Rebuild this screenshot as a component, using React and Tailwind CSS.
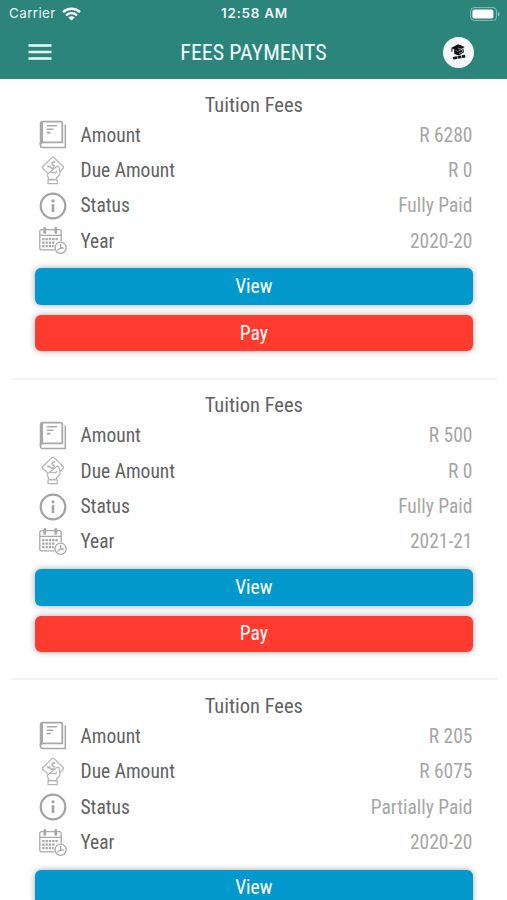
const fees = [
    { id: 1, amount: "R 6280", due: "R 0", status: "Fully Paid", year: "2020-20" },
    { id: 2, amount: "R 500", due: "R 0", status: "Fully Paid", year: "2021-21" },
    { id: 3, amount: "R 205", due: "R 6075", status: "Partially Paid", year: "2020-20" },
];

const BookIcon = () => (
    <svg width="28" height="30" viewBox="0 0 28 30" fill="none" stroke="#a8a8a8" strokeWidth="1.8">
        <path d="M3.2 1.6H21.7a1.6 1.6 0 0 1 1.6 1.6v19.2H3.4" />
        <path d="M3.2 1.6A1.9 1.9 0 0 0 1.5 3.5v22a2 2 0 0 0 2 2h22.8V4.6" strokeWidth="1.5" />
        <path d="M2.8 2v20.4a2.2 2.2 0 0 0-1.4 2" strokeWidth="2.4" />
        <path d="M7.9 5.8h10M7.9 9.2h6.4M7.9 12.6h3.6" strokeWidth="1.6" />
    </svg>
);

const DueIcon = () => (
    <svg width="28" height="30" viewBox="-0.8 0.4 28 30" fill="none" stroke="#b5b5b5" strokeWidth="1.2" strokeLinejoin="round">
        <path d="M8.4 17.8 3 12.9a1.5 1.5 0 0 1 0-2L12.2 2a1.5 1.5 0 0 1 2 0l9.1 8.9a1.5 1.5 0 0 1 0 2l-3.2 3.2" />
        <path d="M15.5 6.6c-2-.8-3.5.3-3 2 .4 1.2 2.3 1.2 2.3 2.6" strokeWidth="1.7" />
        <path d="M7.4 11.2c1.4-.9 2.6-.6 3.4.6s2.2 1 3.6.2" strokeWidth="1.7" />
        <path d="M8.4 17.8c1-1.3 2.6-1.6 4.2-1l3 .4c1.3-.3 1.4-1.5.2-2.1M17.3 10.6c1.3-.4 2 .4 2 1.6l.9 4.2c.2 2.4-1 4.2-3.4 5.6v1.7H8.6v-2l-1-1.3c-.4-1 0-2 .8-2.6Z" />
        <path d="M8.2 24.2h9.2v3.9H8.2z" />
    </svg>
);

const InfoIcon = () => (
    <svg width="28" height="28" viewBox="0 0 28 28" fill="none" stroke="#a2a2a2">
        <circle cx="14" cy="14" r="12.3" strokeWidth="2.2" />
        <path d="M14 12.2v7.8" strokeWidth="2.6" />
        <circle cx="14" cy="8.8" r="1.6" fill="#a2a2a2" stroke="none" />
    </svg>
);

const CalendarIcon = () => (
    <svg width="28" height="28" viewBox="0 0 28 28" fill="none" stroke="#a8a8a8" strokeWidth="1.3">
        <path d="M15.5 22.9H2.5A1.7 1.7 0 0 1 .8 21.2V4.3a1.7 1.7 0 0 1 1.7-1.7h18a1.7 1.7 0 0 1 1.7 1.7v10M.8 8.4h21.4" />
        <path d="M5.8 1.4v4.2M16.8 1.4v4.2" strokeWidth="2.8" strokeLinecap="round" />
        <path d="M3.2 12.2h16.4M3.2 15.7h13M3.2 19.2h11.5" strokeWidth="2.3" strokeDasharray="2.3 1" />
        <circle cx="21.6" cy="20.8" r="5.6" fill="#fff" />
        <path d="M21.6 17v4l-3.2 2.2M21.6 21h3.1" />
    </svg>
);

const Row = ({ icon, label, value }) => (
    <div className="flex h-[35.4px] items-center text-[19.5px]">
        <div className="flex w-[41.5px] shrink-0">{icon}</div>
        <span className="text-[#626262]">{label}</span>
        <span className="ml-auto text-[#a6a6a6]">{value}</span>
    </div>
);

const FeeCard = ({ fee }) => (
    <section className="mr-[10.5px] ml-[11px] h-[300.6px] shrink-0 border-b-2 border-[#f2f2f2] pt-[13.5px]">
        <h2 className="text-center text-[20.5px] leading-6 text-[#626262]">Tuition Fees</h2>
        <div className="mt-[1px] pr-6 pl-7">
            <Row icon={<BookIcon />} label="Amount" value={fee.amount} />
            <Row icon={<DueIcon />} label="Due Amount" value={fee.due} />
            <Row icon={<InfoIcon />} label="Status" value={fee.status} />
            <Row icon={<CalendarIcon />} label="Year" value={fee.year} />
        </div>
        <div className="mt-[9.4px] flex flex-col gap-[10px] px-6 text-[19.5px] leading-5 text-white">
            <button className="h-[36.5px] rounded-[6px] bg-[#0399cd] pt-px shadow-[0_0_6px_rgba(0,0,0,0.35)]">View</button>
            <button className="h-[36.5px] rounded-[6px] bg-[#ff3b30] pt-px shadow-[0_0_6px_rgba(0,0,0,0.35)]">Pay</button>
        </div>
    </section>
);

const StatusBar = () => (
    <div className="grid h-[27px] grid-cols-3 items-center pr-[7px] pl-[9px] font-['Inter',sans-serif] text-[13.5px] font-semibold text-white/95">
        <div className="flex items-center gap-[6px]">
            <span className="font-normal tracking-[0.35px]">Carrier</span>
            <svg width="19" height="14" viewBox="0 0 19 14" fill="none" stroke="#fff" strokeWidth="2.3">
                <path d="M1 5.1c4.8-4.5 12.2-4.5 17 0M4 8.3c3.2-2.9 7.8-2.9 11 0" />
                <path d="M9.5 13.6 6.3 10.4c1.8-1.6 4.6-1.6 6.4 0Z" fill="#fff" stroke="none" />
            </svg>
        </div>
        <span className="text-center tracking-[0.7px] whitespace-nowrap">12:58 AM</span>
        <svg className="ml-auto" width="30" height="14" viewBox="0 0 30 14" fill="none">
            <rect x="0.6" y="0.6" width="26" height="12.8" rx="3.6" stroke="#fff" strokeOpacity="0.45" />
            <rect x="2.4" y="2.4" width="21" height="9.2" rx="2" fill="#fff" />
            <path d="M28 4.7c2.2.8 2.2 3.8 0 4.6Z" fill="#fff" fillOpacity="0.5" />
        </svg>
    </div>
);

export default function App() {
    return (
        <div className="flex h-[900px] w-[507px] flex-col overflow-hidden bg-white font-['Roboto_Condensed','Roboto',sans-serif] text-[20px] font-normal [font-stretch:75%]">
            <header className="h-[79px] shrink-0 bg-[#2c857a]">
                <StatusBar />
                <div className="grid h-[50px] grid-cols-3 items-center pr-[33px] pl-[33px]">
                    <svg className="-ml-[5px]" width="24" height="18" viewBox="0 0 24 18" stroke="#e8fffb" strokeWidth="2.5">
                        <path d="M0.5 2.4h23M0.5 9h23M0.5 15.6h23" />
                    </svg>
                    <h1 className="text-center text-[22px] whitespace-nowrap text-[#edfffc]">FEES PAYMENTS</h1>
                    <div className="ml-auto flex size-[31px] items-center justify-center rounded-full bg-[#f5f8f8]">
                        <svg width="17" height="18" viewBox="0 0 17 18" fill="#111">
                            <path d="m1 5.1 7.2-3.8 6.5 2.8-7 4.2Z" />
                            <path d="m4.2 6.6 3.8 2 5.4-3.2.5 3.8-5 3.2-4.7-1.3Z" />
                            <path d="m8.2 5.2 4.2 1.4v2.3l-3.4 1.6" stroke="#f5f8f8" strokeWidth="0.6" fill="none" />
                            <path d="M1.9 5.4v3.4" stroke="#111" />
                            <path d="m2.8 14 12.2-2.3.4 2.8-12 2.1Z" />
                            <path d="m7.1 12.6 1 4M11.3 12l.5 3.5" stroke="#f5f8f8" strokeWidth="0.7" />
                        </svg>
                    </div>
                </div>
            </header>
            <main className="flex flex-col">
                {fees.map((fee) => (
                    <FeeCard key={fee.id} fee={fee} />
                ))}
            </main>
        </div>
    );
}
